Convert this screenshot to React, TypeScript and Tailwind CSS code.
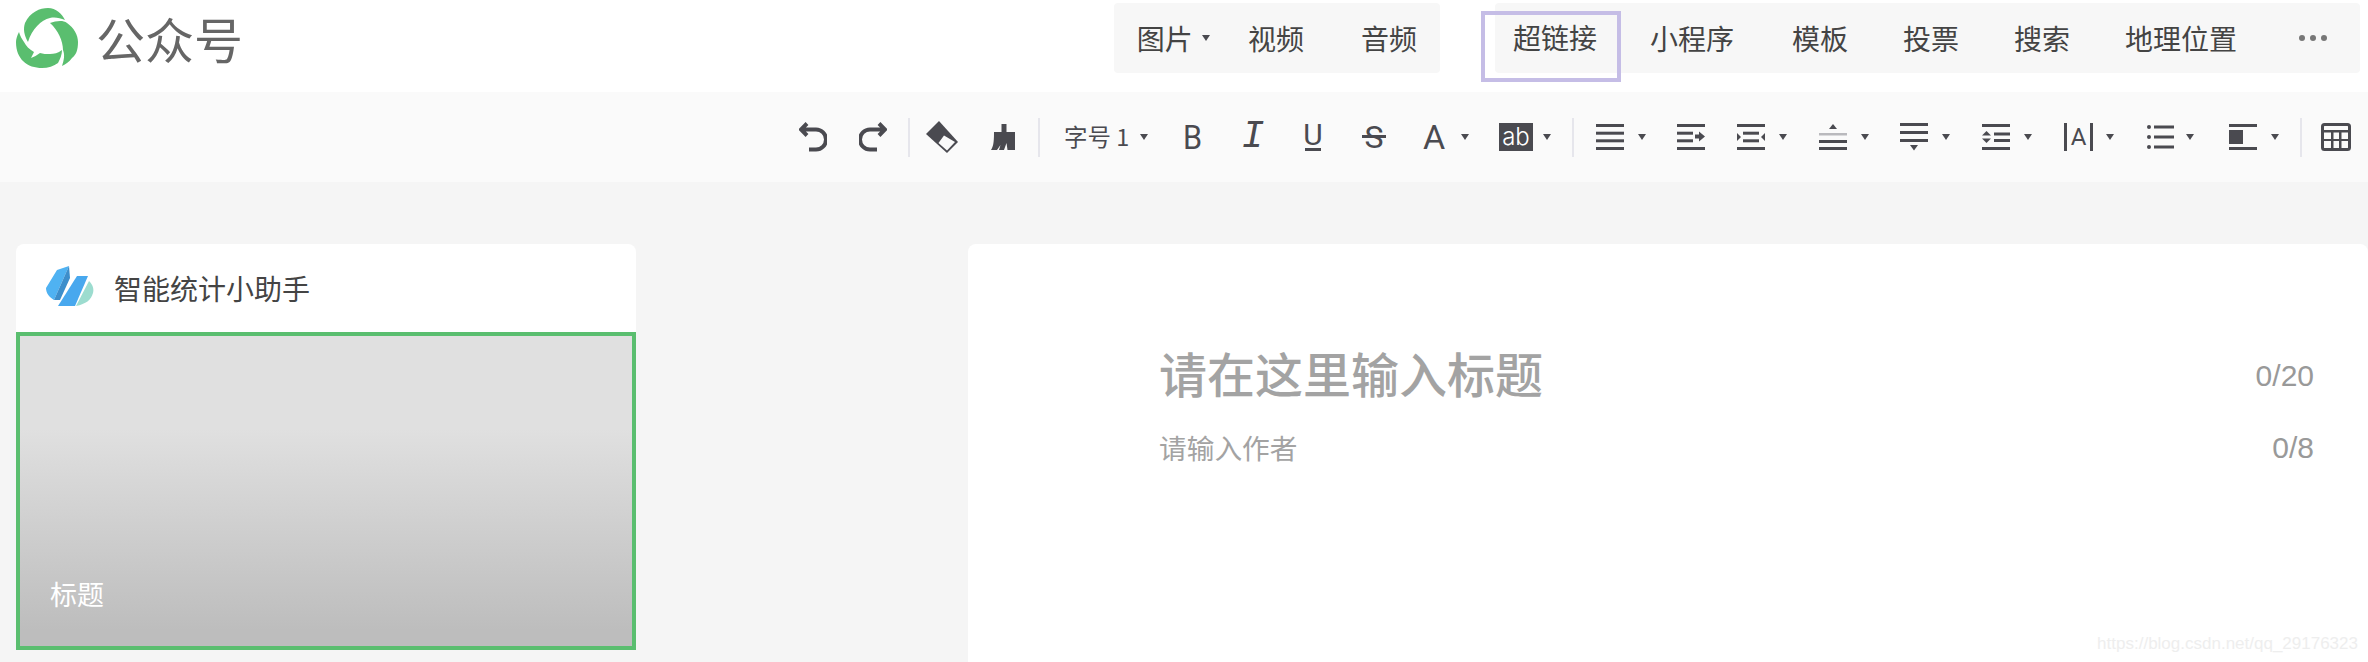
import type { ReactNode } from "react";

const cjk = "font-['Noto_Sans_CJK_SC','Noto_Sans',sans-serif]";

function Caret({ className = "" }: { className?: string }) {
  return (
    <svg width="8" height="6" viewBox="0 0 8 6" className={`shrink-0 ${className}`}>
      <path d="M0 0h8L4 6z" fill="#4a4a50" />
    </svg>
  );
}

function Divider({ className = "" }: { className?: string }) {
  return <div className={`h-[39px] w-[2px] shrink-0 bg-[#e6e6ec] ${className}`} />;
}

function Bars({ children, width = 28, height = 26, className = "" }: { children: ReactNode; width?: number; height?: number; className?: string }) {
  return (
    <svg width={width} height={height} viewBox={`0 0 ${width} ${height}`} fill="#4a4a50" className={`shrink-0 ${className}`}>
      {children}
    </svg>
  );
}

function Logo() {
  return (
    <svg width="62" height="60" viewBox="0 0 62 60" fill="#5abe6f" className="shrink-0">
      <path d="M12 34C8 27 7 21 9 15C14 4 24 0 32 0C40 0 46 6 49 12C44 10 39 9 34 10C25 12 16 21 12 34Z" />
      <path d="M34 15C40 13 47 12 51 15C58 20 62 27 62 34C62 42 60 47 56 50C53 54 50 56 46 58C48 52 49 47 47 42C47 33 42 22 34 15Z" />
      <path d="M3 24C1 28 0 31 0 34C0 43 3 49 7 53C12 58 19 60 26 60C32 60 38 58 42 55C44 51 46 47 46 42C42 45 38 46 34 46C30 46 27 46 24 45C21 47 18 49 15 50C16 48 17 46 18 44C13 41 10 38 8 34C6 31 4 28 3 24Z" />
    </svg>
  );
}

function BrandMark() {
  return (
    <svg width="48" height="47" viewBox="0 0 48 47" className="shrink-0">
      <path d="M0 23L11 5L23 1L19 10L8 35C3 32 0 28 0 23Z" fill="#4fb2f2" />
      <path d="M19 10L23 1L24 13L14 35L8 35Z" fill="#3d8ecb" />
      <path d="M31 11H42L29 41H12Z" fill="#48a8ee" />
      <path d="M43 16C47 20 48 24 47 28C45 35 40 39 30 41Z" fill="#9cdccf" />
    </svg>
  );
}

function NavItem({ children, className = "" }: { children: ReactNode; className?: string }) {
  return <span className={`shrink-0 text-[28px] leading-none text-[#444] ${className}`}>{children}</span>;
}

function Glyph({ children, className = "" }: { children: ReactNode; className?: string }) {
  return (
    <span className={`flex shrink-0 items-center justify-center leading-none text-[#4a4a50] ${className}`}>
      {children}
    </span>
  );
}

function Toolbar() {
  return (
    <div className="flex h-[90px] items-center justify-end bg-[#fafafa] pr-[17px]">
      <Bars width={28} height={30}>
        <path d="M8 1.500L2 7.500L8 13.500M3 7.500H17A10 10 0 0 1 17 27.500H10" fill="none" stroke="#4a4a50" strokeWidth="4" />
      </Bars>
      <Bars width={28} height={30} className="ml-[32px]">
        <path d="M20 1.500L26 7.500L20 13.500M25 7.500H11A10 10 0 0 0 11 27.500H18" fill="none" stroke="#4a4a50" strokeWidth="4" />
      </Bars>
      <Divider className="ml-[21px]" />
      <Bars width={32} height={32} className="ml-[16px]">
        <path d="M13 0L32 21L21 32L0 13Z" />
        <path d="M18 14.500L29 21L21 29.500L12.500 22Z" fill="#fafafa" />
      </Bars>
      <Bars width={24} height={26} className="ml-[33px]">
        <path d="M10.500 0H15.500V8H24V26H16.500L15.500 19L13 26H8L9.500 21L6 26H0C3 22 3 14 3 8H10.500Z" />
      </Bars>
      <Divider className="ml-[23px]" />
      <span className={`ml-[24px] w-[66px] shrink-0 whitespace-nowrap text-[23.500px] leading-none text-[#4a4a50] ${cjk}`}>字号 1</span>
      <Caret className="ml-[10px]" />

      <Glyph className="ml-[36px] h-[30px] w-[18px] font-['Roboto'] text-[34px]"><span className="scale-x-[.9]">B</span></Glyph>
      <Glyph className="ml-[42px] h-[30px] w-[18px] font-['Liberation_Mono'] text-[38px] italic">I</Glyph>
      <div className="ml-[42px] flex h-[30px] w-[18px] shrink-0 flex-col items-center">
        <span className="font-['Roboto'] text-[30px] leading-[25px] text-[#4a4a50]">U</span>
        <span className="mt-[1px] h-[3px] w-[16px] bg-[#4a4a50]" />
      </div>
      <div className="relative ml-[40px] flex h-[30px] w-[24px] shrink-0 items-center justify-center">
        <span className="font-['Roboto'] text-[32px] leading-none text-[#4a4a50]">S</span>
        <span className="absolute left-0 top-[13px] h-[3px] w-[24px] bg-[#4a4a50]" />
      </div>
      <Glyph className="ml-[36px] h-[30px] w-[24px] font-['Roboto'] text-[34px]">A</Glyph>
      <Caret className="ml-[15px]" />
      <span className="ml-[30px] flex h-[28px] w-[34px] shrink-0 items-center justify-center bg-[#4a4a50] font-['Inter'] text-[24px] font-light leading-none text-white">ab</span>
      <Caret className="ml-[10px]" />
      <Divider className="ml-[21px]" />

      <Bars className="ml-[22px]">
        <rect y="0" width="28" height="3" /><rect y="7.700" width="28" height="3" /><rect y="15.300" width="28" height="3" /><rect y="23" width="28" height="3" />
      </Bars>
      <Caret className="ml-[14px]" />
      <Bars className="ml-[31px]">
        <rect y="0" width="28" height="3" /><rect y="7.700" width="16" height="3" /><rect y="15.300" width="16" height="3" /><rect y="23" width="28" height="3" />
        <path d="M18 10.500H22V7.500L28 12.500L22 17.500V14.500H18Z" />
      </Bars>
      <Bars className="ml-[32px]">
        <rect y="0" width="28" height="3" /><rect x="6" y="7.700" width="16" height="3" /><rect x="6" y="15.300" width="16" height="3" /><rect y="23" width="28" height="3" />
        <path d="M0 9L4 13L0 17Z" /><path d="M28 9L24 13L28 17Z" />
      </Bars>
      <Caret className="ml-[14px]" />
      <Bars className="ml-[32px]">
        <path d="M14 0L18 5H10Z" /><rect y="9" width="28" height="2.500" fill="#b9b9bd" /><rect y="16" width="28" height="3" /><rect y="23" width="28" height="3" />
      </Bars>
      <Caret className="ml-[14px]" />
      <Bars height={28} className="ml-[31px]">
        <rect y="0" width="28" height="3" /><rect y="8" width="28" height="3" /><rect y="16" width="28" height="3" /><path d="M10 22H18L14 27.500Z" />
      </Bars>
      <Caret className="ml-[14px]" />

      <Bars className="ml-[32px]">
        <rect y="0" width="28" height="3" /><rect x="12" y="8.500" width="16" height="3" /><rect x="12" y="15" width="16" height="3" /><rect y="23" width="28" height="3" />
        <path d="M4.500 7L9 11.500H0Z" /><path d="M0 14.500H9L4.500 19Z" />
      </Bars>
      <Caret className="ml-[14px]" />
      <div className="ml-[32px] flex h-[28px] w-[29px] shrink-0 items-center justify-center border-x-[3px] border-[#4a4a50]">
        <span className="font-['Roboto'] text-[24px] leading-none text-[#4a4a50]">A</span>
      </div>
      <Caret className="ml-[13px]" />
      <Bars width={27} className="ml-[33px]">
        <circle cx="2" cy="3" r="2" /><circle cx="2" cy="13" r="2" /><circle cx="2" cy="23" r="2" />
        <rect x="7" y="1.500" width="20" height="3" /><rect x="7" y="11.500" width="20" height="3" /><rect x="7" y="21.500" width="20" height="3" />
      </Bars>
      <Caret className="ml-[12px]" />
      <Bars className="ml-[35px]">
        <rect y="0" width="28" height="3" /><rect y="6" width="14" height="14" /><rect y="23" width="28" height="3" />
      </Bars>
      <Caret className="ml-[14px]" />
      <Divider className="ml-[21px]" />
      <Bars width={30} height={28} className="ml-[19px]">
        <rect x="1.500" y="1.500" width="27" height="25" rx="2" fill="none" stroke="#4a4a50" strokeWidth="3" />
        <rect x="2" y="7" width="26" height="2.500" />
        <path d="M2 16H28V18H2Z" />
        <rect x="10" y="8" width="2.500" height="18" /><rect x="18" y="8" width="2.500" height="18" />
      </Bars>
    </div>
  );
}

export default function App() {
  return (
    <div className={`relative flex h-[662px] w-[2368px] flex-col overflow-hidden bg-[#f5f5f5] ${cjk}`}>
      {/* top bar */}
      <div className="flex h-[92px] items-start bg-white pr-[8px]">
        <div className="ml-[16px] mt-[8px]"><Logo /></div>
        <span className="ml-[18px] mt-[14px] text-[49px] leading-[48px] text-[#666]">公众号</span>
        <div className="ml-auto mt-[3px] flex h-[70px] items-center rounded-[4px] bg-[#f7f7f7] pl-[23px] pr-[23px]">
          <NavItem>图片</NavItem>
          <Caret className="ml-[9px]" />
          <NavItem className="ml-[38px]">视频</NavItem>
          <NavItem className="ml-[57px]">音频</NavItem>
        </div>
        <div className="ml-[55px] mt-[3px] flex h-[70px] items-center rounded-[4px] bg-[#f7f7f7] pl-[18px] pr-[33px]">
          <div className="relative">
            <NavItem>超链接</NavItem>
            <div className="absolute -left-[32px] -right-[24px] top-[-12px] h-[71px] border-4 border-[#c5bde6]" />
          </div>
          <NavItem className="ml-[53px]">小程序</NavItem>
          <NavItem className="ml-[58px]">模板</NavItem>
          <NavItem className="ml-[55px]">投票</NavItem>
          <NavItem className="ml-[55px]">搜索</NavItem>
          <NavItem className="ml-[55px]">地理位置</NavItem>
          <div className="ml-[62px] flex gap-[5px]">
            <span className="size-[6px] rounded-full bg-[#777]" />
            <span className="size-[6px] rounded-full bg-[#777]" />
            <span className="size-[6px] rounded-full bg-[#777]" />
          </div>
        </div>
      </div>

      <Toolbar />

      {/* content */}
      <div className="flex flex-1 pl-[16px] pt-[62px]">
        <div className="h-[406px] w-[620px] shrink-0 overflow-hidden rounded-t-[8px] bg-white">
          <div className="flex h-[88px] items-center pl-[30px]">
            <BrandMark />
            <span className="ml-[20px] text-[28px] leading-none text-[#444]">智能统计小助手</span>
          </div>
          <div className="flex h-[318px] items-end border-4 border-[#5abe6f] bg-[linear-gradient(#e0e0e0_30%,#bdbdbd_95%)] pb-[39px] pl-[30px]">
            <span className="text-[27px] leading-none text-white">标题</span>
          </div>
        </div>
        <div className="ml-[332px] flex-1 rounded-t-[8px] bg-white pl-[191px] pr-[54px] pt-[102px]">
          <div className="flex items-start justify-between">
            <span className="text-[48px] font-medium leading-[52px] text-[#a3a3a3]">请在这里输入标题</span>
            <span className="mt-[16px] font-['Liberation_Sans'] text-[30px] leading-[28px] text-[#999]">0/20</span>
          </div>
          <div className="mt-[35px] flex items-start justify-between">
            <span className="text-[27.700px] leading-[28px] text-[#a3a3a3]">请输入作者</span>
            <span className="mt-[1px] font-['Liberation_Sans'] text-[30px] leading-[28px] text-[#999]">0/8</span>
          </div>
        </div>
      </div>

      <span className="absolute right-[10px] top-[634px] font-['Liberation_Sans'] text-[17px] leading-[20px] text-[#eeeeee]">https://blog.csdn.net/qq_29176323</span>
    </div>
  );
}
